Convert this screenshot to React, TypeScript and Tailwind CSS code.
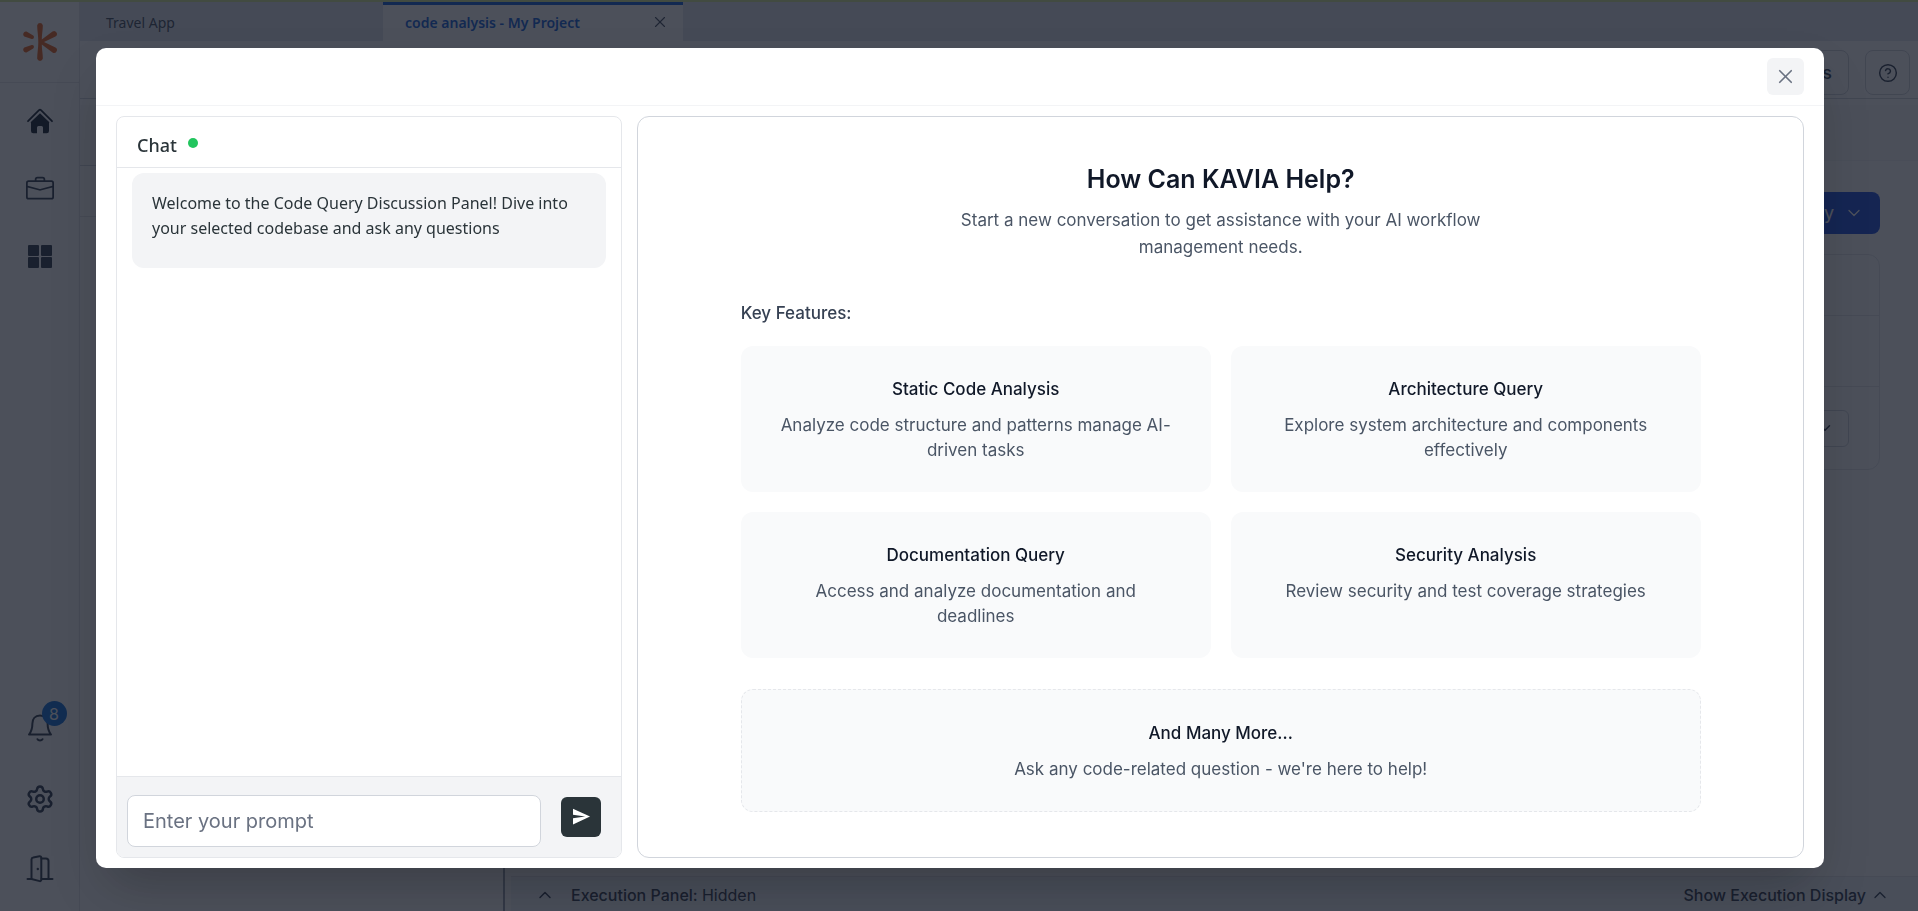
import { ChevronDown, ChevronUp, CircleHelp, Settings, X } from "lucide-react";
import { BsBriefcase } from "react-icons/bs";
import { IoMdSend } from "react-icons/io";

const hind = "font-['Noto_Sans',sans-serif]";

const features = [
  { title: "Static Code Analysis", text: "Analyze code structure and patterns manage AI-driven tasks" },
  { title: "Architecture Query", text: "Explore system architecture and components effectively" },
  { title: "Documentation Query", text: "Access and analyze documentation and deadlines" },
  { title: "Security Analysis", text: "Review security and test coverage strategies" },
];

function Logo() {
  return (
    <svg width="36" height="40" viewBox="0 0 36 40" fill="#e86a2a" aria-hidden="true">
      <path d="M15.200 3.200a2.900 2.900 0 0 1 5.600 0c.2 4-1 9-1 14.200L30.500 9.500a2.900 2.900 0 0 1 3 5L22 20l11.500 5.500a2.900 2.900 0 0 1-3 5L19.800 22.600c0 5.200 1.200 10.200 1 14.200a2.900 2.900 0 0 1-5.600 0c-.2-4 1.100-10 1.100-16.800s-1.300-12.800-1.100-16.800z" />
      <path d="M4.500 9.600l6.700 4a1.900 1.900 0 0 1-1.500 3.400L2.300 14.600a2.800 2.800 0 0 1 2.200-5z" />
      <path d="M4.500 30.400l6.700-4A1.900 1.900 0 0 0 9.700 23L2.300 25.400a2.800 2.800 0 0 0 2.200 5z" />
    </svg>
  );
}

function HomeIcon() {
  return (
    <svg width="28" height="28" viewBox="0 0 28 28" fill="none" aria-hidden="true">
      <path d="M2 14.200L13 3.200a1.500 1.500 0 0 1 2 0l11 11" stroke="#1f2937" strokeWidth="1.800" strokeLinecap="round" />
      <path d="M14 6.200l9.600 9.400h-.6V24a2.300 2.300 0 0 1-2.300 2.300H17V20.500a1.500 1.500 0 0 0-1.500-1.500h-3a1.500 1.500 0 0 0-1.500 1.500v5.800H7.300A2.300 2.300 0 0 1 5 24v-8.400h-.6z" fill="#1f2937" />
    </svg>
  );
}

function GridIcon() {
  return (
    <svg width="26" height="26" viewBox="0 0 26 26" fill="#374151" aria-hidden="true">
      <rect x="1" y="2" width="11" height="11" rx="1" />
      <rect x="14" y="2" width="11" height="11" rx="1" />
      <rect x="1" y="14" width="11" height="11" rx="1" />
      <rect x="14" y="14" width="11" height="11" rx="1" />
    </svg>
  );
}

function BellIcon() {
  return (
    <svg width="28" height="30" viewBox="0 0 28 30" fill="none" stroke="#374151" strokeWidth="2" strokeLinecap="round" strokeLinejoin="round" aria-hidden="true">
      <path d="M14 2.500c-5 0-7.600 3.500-7.600 8 0 5.500-1.400 8.500-3.400 11h22c-2-2.500-3.400-5.500-3.400-11 0-4.500-2.600-8-7.600-8z" />
      <path d="M11.500 26.200a2.800 2.400 0 0 0 5 0" />
    </svg>
  );
}

function DoorIcon() {
  return (
    <svg width="28" height="28" viewBox="0 0 28 28" fill="none" stroke="#374151" strokeWidth="2" strokeLinecap="round" strokeLinejoin="round" aria-hidden="true">
      <path d="M1.500 24h4M22.500 24h4" />
      <path d="M5.500 24V4.500a2 2 0 0 1 1.700-2l6.300-1.200a1.500 1.500 0 0 1 1.800 1.500v22a1.300 1.300 0 0 1-1.600 1.300L5.500 24z" />
      <path d="M15.500 3.500h4.500a2.500 2.500 0 0 1 2.500 2.500v18h-7" />
      <circle cx="11.800" cy="14" r="1.200" fill="#374151" stroke="none" />
    </svg>
  );
}

function Sidebar() {
  return (
    <nav aria-label="Main" className="flex w-20 shrink-0 flex-col items-center border-r border-gray-200 bg-white">
      <a href="#" aria-label="Start" className="flex h-[81px] w-full items-center justify-center border-b border-gray-200">
        <Logo />
      </a>
      <div className="flex flex-col items-center gap-10 pt-6">
        <a href="#home" aria-label="Home"><HomeIcon /></a>
        <a href="#projects" aria-label="Projects" className="text-gray-700"><BsBriefcase size={28} /></a>
        <a href="#boards" aria-label="Boards"><GridIcon /></a>
      </div>
      <div className="mt-auto flex flex-col items-center gap-[41px] pb-7">
        <button type="button" aria-label="Notifications" className="relative">
          <BellIcon />
          <span className="absolute -top-3 left-4 flex size-[25px] items-center justify-center rounded-full bg-[#1a73d9] text-base text-white">8</span>
        </button>
        <button type="button" aria-label="Settings" className="text-gray-700"><Settings size={30} strokeWidth={2} /></button>
        <button type="button" aria-label="Log out"><DoorIcon /></button>
      </div>
    </nav>
  );
}

function Workspace() {
  return (
    <div className="flex min-w-0 flex-1 flex-col">
      <div className={`${hind} flex h-[39px] bg-slate-200 text-sm`}>
        <a href="#travel" className="w-[303px] px-[26px] pt-[11px] leading-5 text-gray-600">Travel App</a>
        <div className="flex w-[300px] justify-between border-t-3 border-[#1a66d9] bg-white pt-2 pr-3.5 pl-[22px]">
          <a href="#analysis" className="font-semibold leading-5 text-[#1a66d9]">code analysis - My Project</a>
          <button type="button" aria-label="Close tab" className="self-start text-gray-600"><X size={18} strokeWidth={1.5} /></button>
        </div>
      </div>
      <header className="flex h-[58px] items-center justify-end gap-4 border-b border-gray-300 bg-white px-2 pt-1.5">
        <button type="button" className="h-[45px] rounded-lg border border-gray-300 px-4 text-lg font-medium text-gray-700">Settings</button>
        <button type="button" aria-label="Help" className="flex size-[45px] items-center justify-center rounded-lg border border-gray-300 text-gray-700"><CircleHelp size={20} strokeWidth={1.75} /></button>
      </header>
      <div className="flex min-h-0 flex-1 border-t-6 border-white bg-white">
        <div className="w-[425px] border-r-2 border-gray-400">
          <div className="h-[61px] border-b border-gray-300 bg-gray-50" />
          <div className="h-[51px] border-b border-gray-200" />
        </div>
        <main className="flex min-w-0 flex-1 flex-col pl-[6px]">
          <div className="h-14 shrink-0 border-b border-gray-100 bg-gray-50" />
          <div className="flex flex-1 flex-col pr-[38px] pt-[31px]">
            <button type="button" className="flex h-[42px] items-center gap-2.5 self-end rounded-lg bg-[#2456e0] px-4 text-lg text-white">Query<ChevronDown size={20} strokeWidth={1.5} /></button>
            <div className="mt-5 rounded-xl border border-gray-200">
              <div className="h-[61px] border-b border-gray-200" />
              <div className="h-[71px] border-b border-gray-200" />
              <div className="flex h-[82px] items-center justify-end px-[30px]">
                <button type="button" aria-label="Row options" className="flex h-[37px] w-24 items-center justify-end rounded-md border border-gray-300 pr-3.5 text-gray-700"><ChevronDown size={18} /></button>
              </div>
            </div>
          </div>
          <footer className="flex h-[35px] items-center justify-between border-t border-gray-200 bg-slate-100 pt-0.5 pl-6 pr-7 text-base font-medium text-gray-700">
            <div className="flex items-center gap-4"><ChevronUp size={20} strokeWidth={1.75} /><p>Execution Panel: <span className="font-normal">Hidden</span></p></div>
            <button type="button" className="flex items-center gap-1">Show Execution Display<ChevronUp size={20} strokeWidth={1.5} /></button>
          </footer>
        </main>
      </div>
    </div>
  );
}

function ChatPanel() {
  return (
    <section aria-label="Chat" className="flex w-[30%] shrink-0 flex-col overflow-hidden rounded-lg border border-gray-200">
      <div className="flex h-[51px] items-center gap-[11px] border-b border-gray-200 px-5 pt-0.5">
        <h2 className={`${hind} pt-1 text-lg font-medium leading-6 text-[#2a3439]`}>Chat</h2>
        <span className="size-2.5 rounded-full bg-[#22c55e]" />
      </div>
      <div className="flex-1 px-[15px] pt-[5px]">
        <p className={`${hind} rounded-xl bg-gray-100 px-5 pt-[18px] pb-[27px] text-base leading-[25px] text-[#2a3439]`}>
          Welcome to the Code Query Discussion Panel! Dive into your selected codebase and ask any questions
        </p>
      </div>
      <form className="flex items-start gap-5 border-t border-gray-200 bg-gray-100 pt-[18px] pr-5 pb-2.5 pl-2.5" onSubmit={(e) => e.preventDefault()}>
        <input aria-label="Prompt" placeholder="Enter your prompt" className="h-[52px] min-w-0 flex-1 rounded-lg border border-gray-300 bg-white px-[15px] text-xl placeholder:text-gray-500" />
        <button type="submit" aria-label="Send" className="mt-0.5 flex size-10 items-center justify-center rounded-md bg-[#2a3439] text-white"><IoMdSend size={21} /></button>
      </form>
    </section>
  );
}

function WelcomePanel() {
  return (
    <section className="flex-1 rounded-xl border border-gray-300 px-5">
      <div className="mx-auto max-w-[960px] text-center">
        <h1 className="pt-11 text-[25px] font-semibold leading-9 text-gray-900">How Can KAVIA Help?</h1>
        <p className="mx-auto mt-2.5 max-w-[600px] text-[17px] leading-[27px] text-gray-600">
          Start a new conversation to get assistance with your AI workflow management needs.
        </p>
        <h2 className="mt-10 text-left text-[17px] font-medium leading-[25px] text-gray-700">Key Features:</h2>
        <div className="mt-5 grid grid-cols-2 gap-5">
          {features.map((f) => (
            <article key={f.title} className="rounded-xl bg-gray-50 px-9 pt-[31px] pb-[29px]">
              <h3 className="text-[17px] font-medium leading-[25px] text-gray-900">{f.title}</h3>
              <p className="mt-[11px] text-[17px] leading-[25px] text-gray-600">{f.text}</p>
            </article>
          ))}
        </div>
        <article className="mt-[31px] rounded-xl border border-dashed border-gray-200 bg-gray-50 px-9 pt-[31px] pb-[29px]">
          <h3 className="text-[17px] font-medium leading-[25px] text-gray-900">And Many More...</h3>
          <p className="mt-[11px] text-[17px] leading-[25px] text-gray-600">Ask any code-related question - we're here to help!</p>
        </article>
      </div>
    </section>
  );
}

export default function App() {
  return (
    <div className="flex h-screen border-t-2 border-[#d8ec9a] bg-white font-['Inter',sans-serif]">
      <Sidebar />
      <Workspace />
      <div className="fixed inset-0 flex items-start bg-[#101623]/75 pt-12 pr-[94px] pl-24">
        <div role="dialog" aria-modal="true" aria-label="Code query" className="flex h-[90vh] flex-1 flex-col overflow-hidden rounded-[10px] bg-white shadow-2xl">
          <div className="flex justify-end border-b border-gray-100 px-5 py-2.5">
            <button type="button" aria-label="Close" className="flex size-[37px] items-center justify-center rounded-md bg-gray-100 text-gray-500"><X size={23} strokeWidth={1.75} /></button>
          </div>
          <div className="flex min-h-0 flex-1 gap-[15px] px-5 py-2.5">
            <ChatPanel />
            <WelcomePanel />
          </div>
        </div>
      </div>
    </div>
  );
}
